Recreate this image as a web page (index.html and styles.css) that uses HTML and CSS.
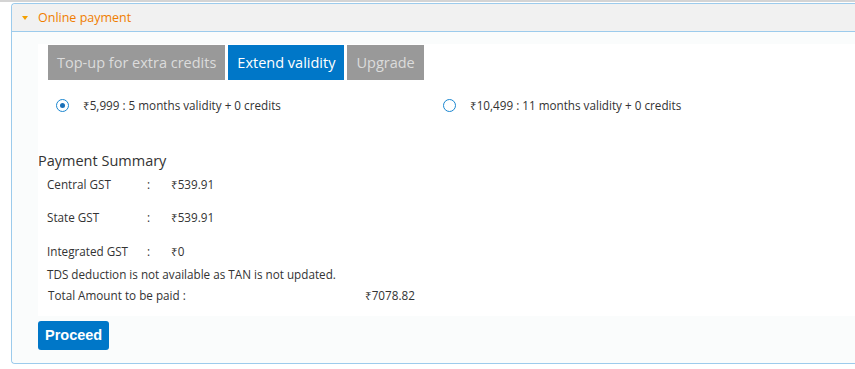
FILE: index.html
```html
<!DOCTYPE html>
<html lang="en">
<head>
    <meta charset="UTF-8">
    <meta name="viewport" content="width=device-width, initial-scale=1.0">
    <title>Online payment</title>
    <link rel="stylesheet" href="styles.css">
</head>
<body>
    <div class="top-rule"></div>
    <div class="panel">
        <div class="panel-header">
            <span class="caret"></span>
            <span class="panel-title">Online payment</span>
        </div>

        <div class="panel-body">
            <div class="content">
                <div class="tabs">
                    <button class="tab">Top-up for extra credits</button>
                    <button class="tab active">Extend validity</button>
                    <button class="tab">Upgrade</button>
                </div>

                <div class="plans">
                    <label class="plan">
                        <span class="radio checked"></span>
                        ₹5,999 : 5 months validity + 0 credits
                    </label>
                    <label class="plan">
                        <span class="radio"></span>
                        ₹10,499 : 11 months validity + 0 credits
                    </label>
                </div>

                <h2 class="summary-title">Payment Summary</h2>

                <div class="summary">
                    <div class="summary-row">
                        <span class="label">Central GST</span>
                        <span class="colon">:</span>
                        <span class="value">₹539.91</span>
                    </div>
                    <div class="summary-row">
                        <span class="label">State GST</span>
                        <span class="colon">:</span>
                        <span class="value">₹539.91</span>
                    </div>
                    <div class="summary-row">
                        <span class="label">Integrated GST</span>
                        <span class="colon">:</span>
                        <span class="value">₹0</span>
                    </div>
                    <p class="note">TDS deduction is not available as TAN is not updated.</p>
                    <div class="total-row">
                        <span class="total-label">Total Amount to be paid :</span>
                        <span class="total-value">₹7078.82</span>
                    </div>
                </div>
            </div>

            <button class="btn-proceed">Proceed</button>
        </div>
    </div>
</body>
</html>
```

FILE: styles.css
```css
:root {
    --blue: #0077c8;
    --border: #9ccbec;
    --orange: #f07d00;
    --text: #333333;
    --tab-gray: #999999;
}

* {
    margin: 0;
    padding: 0;
    box-sizing: border-box;
}

body {
    background: #ffffff;
    font-family: 'Open Sans', 'Noto Sans', sans-serif;
    color: var(--text);
    width: 855px;
    height: 369px;
    overflow: hidden;
}

.top-rule {
    height: 2px;
    background: #d4d4d4;
    margin-bottom: 1px;
}

.panel {
    margin-left: 11px;
    width: 860px;
    border: 1px solid var(--border);
    border-right: none;
    border-radius: 4px 0 0 4px;
}

.panel-header {
    height: 28px;
    background: #f1f1f1;
    border-bottom: 1px solid var(--border);
    display: flex;
    align-items: center;
    padding-left: 10px;
    border-radius: 4px 0 0 0;
}

.caret {
    width: 0;
    height: 0;
    border-left: 3px solid transparent;
    border-right: 3px solid transparent;
    border-top: 4px solid #f4a000;
    margin-right: 10px;
}

.panel-title {
    color: var(--orange);
    font-size: 12.5px;
}

.panel-body {
    background: #fafcfc;
    padding: 12px 0 13px 26px;
    border-radius: 0 0 0 4px;
}

.content {
    background: #ffffff;
    padding-top: 1px;
    padding-bottom: 10px;
}

.tabs {
    display: flex;
    gap: 3px;
    margin-left: 10px;
}

.tab {
    font-family: 'Open Sans', 'Noto Sans', sans-serif;
    font-size: 14.5px;
    height: 35px;
    padding: 0 9px;
    border: none;
    background: var(--tab-gray);
    color: #dcdcdc;
}

.tab.active {
    background: var(--blue);
    color: #ffffff;
}

.plans {
    display: flex;
    margin-top: 17px;
    padding-left: 18px;
}

.plan {
    display: flex;
    align-items: center;
    font-size: 11.7px;
    width: 387px;
}

.radio {
    width: 13px;
    height: 13px;
    border: 1.5px solid #1a86d0;
    border-radius: 50%;
    margin-right: 14px;
    display: flex;
    align-items: center;
    justify-content: center;
}

.radio.checked::after {
    content: "";
    width: 5px;
    height: 5px;
    border-radius: 50%;
    background: #1a70b8;
}

.summary-title {
    font-size: 14.5px;
    font-weight: normal;
    margin-top: 38px;
}

.summary {
    padding-left: 9px;
    font-size: 11.7px;
}

.summary-row {
    display: flex;
    height: 33.5px;
    align-items: center;
}

.summary-row:first-child {
    margin-top: -3px;
}

.label {
    width: 100px;
}

.colon {
    width: 24px;
}

.note {
    margin-top: -5px;
    line-height: 22px;
}

.total-row {
    display: flex;
    line-height: 22px;
    margin-top: -1px;
    padding-left: 1px;
}

.total-label {
    width: 317px;
}

.btn-proceed {
    margin-top: 5px;
    background: var(--blue);
    color: #ffffff;
    border: none;
    border-radius: 3px;
    font-family: 'Liberation Sans', Arial, sans-serif;
    font-weight: bold;
    font-size: 14.5px;
    height: 29px;
    padding: 0 7px;
}
```
